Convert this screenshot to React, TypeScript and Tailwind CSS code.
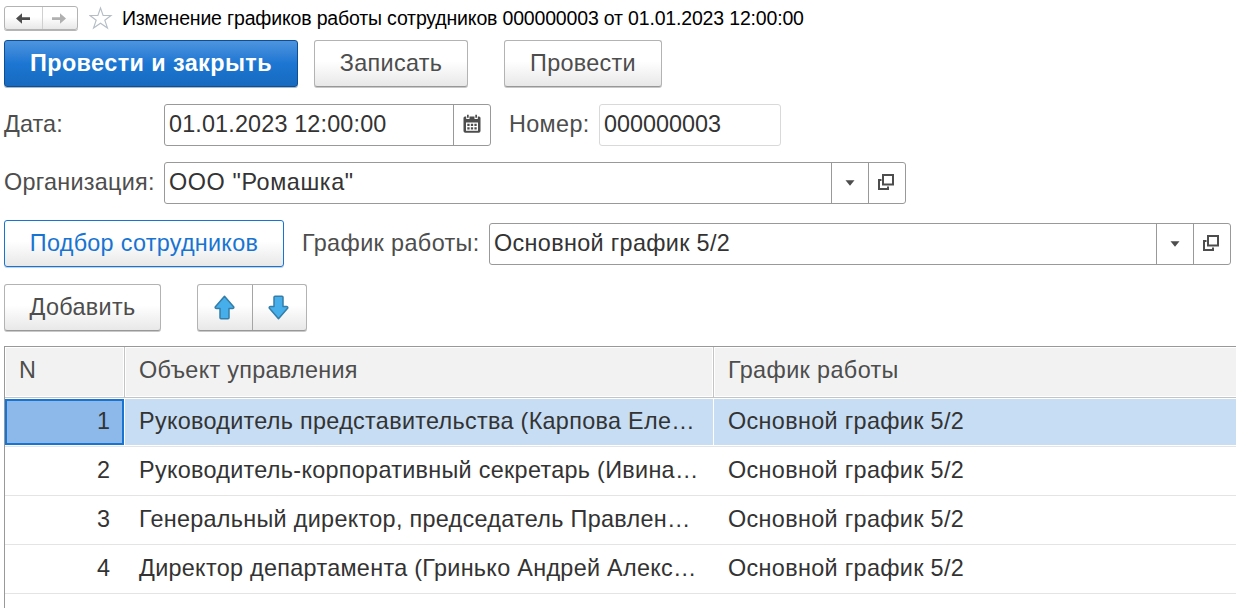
import type { ReactNode } from "react";

const rows = [
  { n: 1, name: "Руководитель представительства (Карпова Еле…" },
  { n: 2, name: "Руководитель-корпоративный секретарь (Ивина…" },
  { n: 3, name: "Генеральный директор, председатель Правлен…" },
  { n: 4, name: "Директор департамента (Гринько Андрей Алекс…" },
];

const plain =
  "border-[#b3b3b3] border-b-[#989898] bg-linear-to-b from-white from-45% to-[#e8e8e8] tracking-[0.3px] text-[#4d4d4d] shadow-[0_1px_0_#c9c9c9]";

function Button({ className, children }: { className: string; children: ReactNode }) {
  return (
    <button className={`flex h-[47px] shrink-0 items-center justify-center rounded-[3px] border pb-[2px] whitespace-nowrap ${className}`}>
      {children}
    </button>
  );
}

function OpenIcon() {
  return (
    <svg width="18" height="18" viewBox="0 0 18 18" fill="none" stroke="#4d4d4d" strokeWidth="2">
      <path d="M6 2h10v9.500H6z" />
      <path d="M4.500 7H2v9h9v-2.500" />
    </svg>
  );
}

function CaretIcon() {
  return (
    <svg width="10" height="6" viewBox="0 0 10 6">
      <path d="M0.500 0.300h9L5 5.700z" fill="#4d4d4d" />
    </svg>
  );
}

function CalendarIcon() {
  return (
    <svg width="18" height="20" viewBox="0 0 18 20">
      <path d="M2 2.500h1.200v2.500h3.300V2.500h5v2.500h3.300V2.500H16q1.500 0 1.500 1.500v13q0 1.800-1.800 1.800H2.300Q0.500 18.800 0.500 17V4Q0.500 2.500 2 2.500z" fill="#4d4d4d" />
      <path d="M3 8.500h12v8.300H3z" fill="#fff" />
      <path d="M4 0.800h1.700v3H4zM12.300 0.800H14v3h-1.700z" fill="#4d4d4d" />
      <path d="M4.300 9.800h2.300v2.300H4.300zM7.850 9.800h2.300v2.300h-2.300zM11.400 9.800h2.300v2.300h-2.300zM4.300 13.200h2.300v2.300H4.300zM7.850 13.200h2.300v2.300h-2.300zM11.400 13.200h2.300v2.300h-2.300z" fill="#4d4d4d" />
    </svg>
  );
}

function NavArrow({ color, flip }: { color: string; flip?: boolean }) {
  return (
    <svg width="14" height="11" viewBox="0 0 14 11" className={flip ? "-scale-x-100" : ""}>
      <path d="M0 5.500L6 0.300V4.200H14v2.700H6v3.900z" fill={color} />
    </svg>
  );
}

function MoveArrow({ flip }: { flip?: boolean }) {
  return (
    <svg width="21" height="25" viewBox="0 0 21 25" className={flip ? "-scale-y-100" : ""}>
      <path d="M10.500 1.200L19.800 12Q20 13.500 18.500 13.500H15v9.300q0 1-1 1H7q-1 0-1-1V13.500H2.500Q1 13.500 1.200 12z" fill="#46aeea" stroke="#347da8" strokeWidth="1.500" strokeLinejoin="round" />
    </svg>
  );
}

function Lookup({ className, children }: { className: string; children: ReactNode }) {
  return (
    <div className={`flex h-[42px] shrink-0 rounded-[3px] border border-[#999] text-[#333] ${className}`}>
      <div className="flex flex-1 items-center pb-[2px] pl-1">{children}</div>
      <div className="flex w-[37px] items-center justify-center border-l border-[#999] pr-px pb-px"><CaretIcon /></div>
      <div className="flex w-[37px] items-center justify-center border-l border-[#999] pr-[2px] pb-[2px]"><OpenIcon /></div>
    </div>
  );
}

export default function App() {
  return (
    <main className="h-[608px] w-[1236px] overflow-hidden bg-white pl-1 font-['Liberation_Sans',Arial,sans-serif] text-[23.4px] leading-[28px] whitespace-nowrap text-[#4d4d4d]">
      <header className="flex h-10 items-start pt-[6px]">
        <div className="flex h-6 w-[74px] rounded-[3px] border border-[#b3b3b3] bg-linear-to-b from-white from-45% to-[#e8e8e8] shadow-[0_1px_0_#b5b5b5]">
          <button className="flex w-[37px] items-center justify-center pr-px"><NavArrow color="#4d4d4d" /></button>
          <button className="flex flex-1 items-center justify-center border-l border-[#d0d0d0] pr-[3px]"><NavArrow color="#b0b0b0" flip /></button>
        </div>
        <svg width="24" height="24" viewBox="0 0 24 24" className="ml-[11px]">
          <path d="M11.500 2L14.100 9.500H22L15.800 14.200L18.500 22L11.500 17.200L4.500 22L7.200 14.200L1 9.500H8.900z" fill="none" stroke="#b5bdc6" strokeWidth="1.100" />
        </svg>
        <h1 className="mt-[-1px] ml-[9px] text-[19.5px] leading-[26px] tracking-[-0.17px] text-black">Изменение графиков работы сотрудников 000000003 от 01.01.2023 12:00:00</h1>
      </header>

      <div className="flex">
        <Button className="w-[294px] border-[#0f4e93] bg-linear-to-b from-[#4c94df] via-[#1c76d2] via-50% to-[#176abf] font-bold tracking-[0.42px] text-white shadow-[0_1px_0_#a9b8c8]"><span>Провести и закрыть</span></Button>
        <Button className={`ml-4 w-[154px] ${plain}`}><span>Записать</span></Button>
        <Button className={`ml-9 w-[158px] ${plain}`}><span>Провести</span></Button>
      </div>

      <div className="mt-[17px] flex h-[42px] items-center">
        <label className="w-40 pb-[2px] tracking-[0.1px]">Дата:</label>
        <div className="flex h-[42px] w-[327px] rounded-[3px] border border-[#999] text-[#333]">
          <div className="flex flex-1 items-center pb-[2px] pl-1 tracking-[0.15px]">01.01.2023 12:00:00</div>
          <div className="flex w-[37px] items-center justify-center border-l border-[#999] pb-[2px]"><CalendarIcon /></div>
        </div>
        <label className="ml-[18px] w-[90px] pb-[2px] tracking-[0.35px]">Номер:</label>
        <div className="flex h-[42px] w-[182px] items-center rounded-[3px] border border-[#d9d9d9] pb-[2px] pl-1 text-[#333]">000000003</div>
      </div>

      <div className="mt-4 flex h-[42px] items-center">
        <label className="w-40 pb-[2px] tracking-[0.27px]">Организация:</label>
        <Lookup className="w-[742px]"><span className="tracking-[0.6px]">ООО "Ромашка"</span></Lookup>
      </div>

      <div className="mt-4 flex h-12 items-start">
        <Button className="w-[280px] border-[#1874d2] bg-linear-to-b from-white from-45% to-[#e8e8e8] tracking-[0.28px] text-[#1874d2] shadow-[0_1px_0_#c4d1df]"><span>Подбор сотрудников</span></Button>
        <label className="mt-[9px] ml-[18px] w-[187px] tracking-[0.38px]">График работы:</label>
        <Lookup className="mt-[3px] w-[742px]"><span className="tracking-[0.33px]">Основной график 5/2</span></Lookup>
      </div>

      <div className="mt-4 flex h-[62px]">
        <Button className={`w-[157px] ${plain}`}><span>Добавить</span></Button>
        <div className="ml-9 flex h-[47px] w-[110px] rounded-[3px] border border-[#b3b3b3] border-b-[#989898] bg-linear-to-b from-white from-45% to-[#e8e8e8] shadow-[0_1px_0_#c9c9c9]">
          <button className="flex flex-1 items-center justify-center pr-px"><MoveArrow /></button>
          <button className="flex w-[54px] items-center justify-center border-l border-[#a5a5a5] pr-[2px]"><MoveArrow flip /></button>
        </div>
      </div>

      <div className="h-[262px] border-t border-l border-[#999]">
        <div className="flex h-[51px] border-b border-[#c4c4c4]">
          <div className="w-[120px] border-r border-[#c4c4c4] p-px"><div className="h-full bg-[#f2f2f2] pt-[8px] pl-[13px]">N</div></div>
          <div className="w-[589px] border-r border-[#c4c4c4] p-px"><div className="h-full bg-[#f2f2f2] pt-[8px] pl-[13px] tracking-[0.3px]">Объект управления</div></div>
          <div className="flex-1 p-px pr-0"><div className="h-full bg-[#f2f2f2] pt-[8px] pl-[13px] tracking-[0.38px]">График работы</div></div>
        </div>
        {rows.map((row) => (
          <div key={row.n} className="flex h-[49px] border-b border-[#e4e4e4] py-px text-[#333]">
            <div className={`mr-px flex h-[46px] w-[119px] items-center justify-end border-2 pr-[12px] pb-[2px] ${row.n === 1 ? "border-[#1874d2] bg-[#8db9ea]" : "border-transparent"}`}>{row.n}</div>
            <div className={`mr-px flex h-[46px] w-[588px] items-center pb-[2px] pl-[14px] tracking-[0.3px] ${row.n === 1 ? "bg-[#c7ddf4]" : ""}`}>{row.name}</div>
            <div className={`flex h-[46px] flex-1 items-center pb-[2px] pl-[14px] tracking-[0.33px] ${row.n === 1 ? "bg-[#c7ddf4]" : ""}`}>Основной график 5/2</div>
          </div>
        ))}
      </div>
    </main>
  );
}
